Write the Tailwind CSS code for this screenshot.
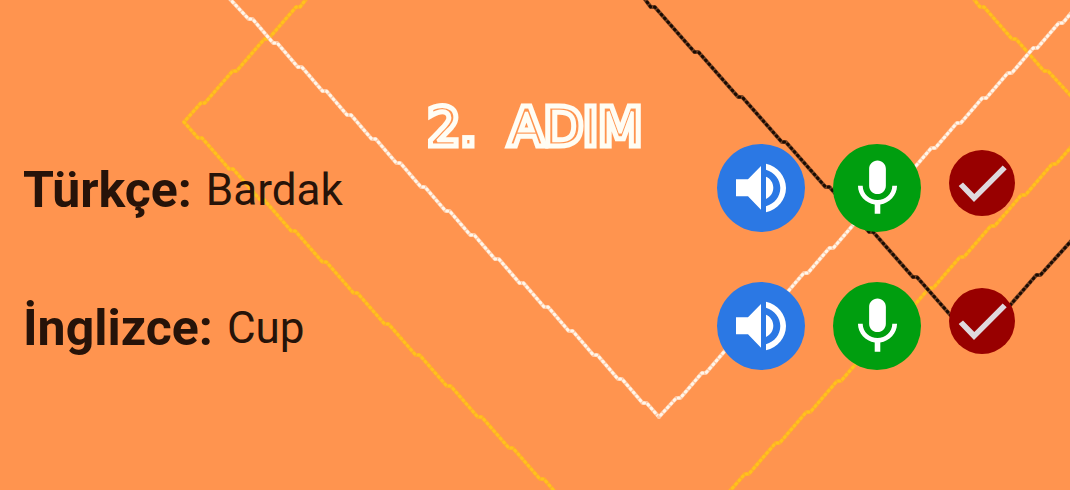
<!DOCTYPE html>
<html lang="tr">
<head>
<meta charset="utf-8">
<meta name="viewport" content="width=device-width, initial-scale=1">
<title>2. Adım</title>
<script src="https://cdn.jsdelivr.net/npm/@tailwindcss/browser@4"></script>
</head>
<body class="relative min-h-screen overflow-x-hidden bg-[#ff944f] font-['Roboto',sans-serif] text-[#261309]">
<svg id="lines" class="absolute inset-0 h-full w-full" fill="none" stroke-linejoin="round" stroke-linecap="round" aria-hidden="true"></svg>

<svg class="hidden" aria-hidden="true">
  <symbol id="volume" viewBox="0 0 88 88"><path fill="currentColor" d="M19 35.3h12L44 22v43.700L31 52.300H19zM49 32.700c4.500 2 7.300 6 7.300 11s-2.800 9-7.300 11.200zM49 19.700c11.700 2.700 20 12.600 20 24.300s-8.300 21.600-20 24.300v-6c8.500-2.600 14.300-9.700 14.300-18.300S57.500 28.300 49 25.700z"/></symbol>
  <symbol id="mic" viewBox="0 0 24 24"><path fill="currentColor" d="M12 14c1.660 0 2.990-1.340 2.990-3L15 5c0-1.660-1.340-3-3-3S9 3.340 9 5v6c0 1.660 1.340 3 3 3zm5.300-3c0 3-2.540 5.100-5.300 5.100S6.700 14 6.700 11H5c0 3.410 2.720 6.230 6 6.720V21h2v-3.280c3.280-.48 6-3.300 6-6.720z"/></symbol>
  <symbol id="check" viewBox="0 0 66 66"><path fill="currentColor" d="M9.700 36l4.300-3.500 11.300 11.500L53.700 15.500l4 3.700L25 52z"/></symbol>
</svg>

<main class="relative pt-[92px]">
  <h1 class="font-['DejaVu_Sans',sans-serif] text-[51px] font-normal">
    <svg class="block h-[72px] w-full overflow-visible fill-[#ff944f] stroke-[#fffdf4]" stroke-linejoin="miter" stroke-miterlimit="2">
      <g class="stroke-[7px]"><text id="heading" x="50%" y="53" text-anchor="middle">2.&nbsp;&nbsp;ADIM</text></g>
      <use href="#heading" class="stroke-[3px]"/>
    </svg>
  </h1>
  <div class="-mt-5 flex flex-col gap-[50px] pr-[55px] pl-[23px]">
    <section class="flex items-start justify-between">
      <p class="-mb-1 flex h-[92px] items-center gap-3.5"><b class="text-[50px] leading-none">Türkçe:</b><span class="text-[44px] leading-none">Bardak</span></p>
      <div class="flex gap-7">
        <button type="button" aria-label="Türkçe dinle" class="size-[88px] rounded-full bg-[#2b78e4] text-white"><svg class="size-full"><use href="#volume"/></svg></button>
        <button type="button" aria-label="Türkçe söyle" class="flex size-[88px] items-center justify-center rounded-full bg-[#009e0f] text-white"><svg class="size-[67px]"><use href="#mic"/></svg></button>
        <button type="button" aria-label="Türkçe onayla" class="mt-1.5 size-[66px] rounded-full bg-[#980000] text-[#dfd9de]"><svg class="size-full"><use href="#check"/></svg></button>
      </div>
    </section>
    <section class="flex items-start justify-between">
      <p class="-mb-1 flex h-[92px] items-center gap-3.5"><b class="text-[50px] leading-none">İnglizce:</b><span class="text-[44px] leading-none">Cup</span></p>
      <div class="flex gap-7">
        <button type="button" aria-label="İngilizce dinle" class="size-[88px] rounded-full bg-[#2b78e4] text-white"><svg class="size-full"><use href="#volume"/></svg></button>
        <button type="button" aria-label="İngilizce söyle" class="flex size-[88px] items-center justify-center rounded-full bg-[#009e0f] text-white"><svg class="size-[67px]"><use href="#mic"/></svg></button>
        <button type="button" aria-label="İngilizce onayla" class="mt-1.5 size-[66px] rounded-full bg-[#980000] text-[#dfd9de]"><svg class="size-full"><use href="#check"/></svg></button>
      </div>
    </section>
  </div>
</main>
<script>
  // Each line is a beaded diagonal with a short flat notch at regular rows.
  const lines = [
    { color: '#ffac2c', bead: '#ffc21c', from: [307, -2], to: [184, 122], first: 7, step: 32 },
    { color: '#ffac2c', bead: '#ffc21c', from: [184, 122], to: [555, 492], first: 138, step: 31 },
    { color: '#ffac2c', bead: '#ffc21c', from: [973, -2], to: [1072, 97], first: 7, step: 32 },
    { color: '#ffac2c', bead: '#ffc21c', from: [1072, 146], to: [729, 492], first: 164, step: 31 },
    { color: '#ffc9a5', bead: '#fff6ea', from: [229, -2], to: [659, 417], first: 19, step: 24 },
    { color: '#ffc9a5', bead: '#fff6ea', from: [1072, 12], to: [659, 417], first: 23, step: 25 },
    { color: '#7a4424', bead: '#1b0c03', from: [644, -2], to: [976, 340], first: 7, step: 45 },
    { color: '#7a4424', bead: '#1b0c03', from: [1072, 240], to: [976, 340], first: 275, step: 44 }
  ];
  const svg = document.getElementById('lines');
  for (const l of lines) {
    const [x0, y0] = l.from, [x1, y1] = l.to, k = (x1 - x0) / (y1 - y0), s = Math.sign(k);
    let d = `M${x0} ${y0}`;
    for (let y = l.first; y < y1 - 4; y += l.step) {
      const x = x0 + k * (y - y0);
      d += `L${x - s * 2} ${y}h${s * 4}`;
    }
    d += `L${x1} ${y1}`;
    for (const [color, dash] of [[l.color, ''], [l.bead, '1 4']]) {
      const p = document.createElementNS('http://www.w3.org/2000/svg', 'path');
      p.setAttribute('d', d);
      p.setAttribute('stroke', color);
      p.setAttribute('stroke-width', dash ? 3 : 4);
      if (dash) p.setAttribute('stroke-dasharray', dash);
      svg.append(p);
    }
  }
</script>
</body>
</html>
